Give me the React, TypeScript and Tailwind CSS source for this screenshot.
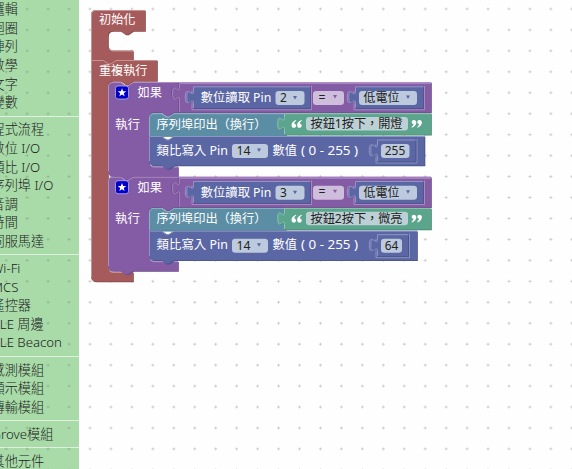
import type { ReactNode } from 'react';

const GROUPS = [
  ['邏輯', '迴圈', '陣列', '數學', '文字', '變數'],
  ['程式流程', '數位 I/O', '類比 I/O', '序列埠 I/O', '音調', '時間', '伺服馬達'],
  ['Wi-Fi', 'MCS', '遙控器', 'BLE 周邊', 'BLE Beacon'],
  ['感測模組', '顯示模組', '傳輸模組'],
  ['Grove模組'],
  ['其他元件'],
];

const NOTCH = 'l5 3.4h2.5l5 -3.4';
const NOTCH_BACK = 'l-5 3.4h-2.5l-5 -3.4';
const TAB = 'c0 8.4 -6.7 -6.7 -6.7 6.3s6.7 -2.1 6.7 6.3';
const TAB_UP = 'c0 -8.4 -6.7 6.7 -6.7 -6.3s6.7 2.1 6.7 -6.3';

type Tone = { fill: string; dark: string; light: string };
const RED: Tone = { fill: '#a55b5b', dark: '#844949', light: '#c99999' };
const PURPLE: Tone = { fill: '#845ba5', dark: '#694984', light: '#b394c9' };
const BLUE: Tone = { fill: '#5b67a5', dark: '#495284', light: '#949cc6' };
const TEAL: Tone = { fill: '#5b8ea5', dark: '#497284', light: '#94b6c6' };
const GREEN: Tone = { fill: '#5ba58c', dark: '#498470', light: '#94c6b5' };

function Shape({ d, edge, tone }: { d: string; edge: string; tone: Tone }) {
  return (
    <g>
      <path d={d} fill={tone.dark} transform="translate(0.8 0.8)" />
      <path d={d} fill={tone.fill} />
      <path d={edge} fill="none" stroke={tone.light} strokeWidth="0.9" />
    </g>
  );
}

function Label({ x, y, w, color = '#fff', size = 12.2, children }: { x: number; y: number; w: number; color?: string; size?: number; children: string }) {
  return (
    <text x={x} y={y} fill={color} fontSize={size} textLength={w} lengthAdjust="spacingAndGlyphs">
      {children}
    </text>
  );
}

function Field({ x, y, w, h = 14, fill = '#bdc9dc', children }: { x: number; y: number; w: number; h?: number; fill?: string; children?: ReactNode }) {
  return (
    <g>
      <rect x={x} y={y} width={w} height={h} rx="3.3" fill={fill} />
      {children}
    </g>
  );
}

function Arrow({ x, y, color }: { x: number; y: number; color: string }) {
  return <path d={`M${x - 2} ${y - 1.5}h4l-2 3.5z`} fill={color} />;
}

function Value({ x, y, w, h = 21.5, tone, parent }: { x: number; y: number; w: number; h?: number; tone: Tone; parent: Tone }) {
  const left = `V${y + 16.8}${TAB_UP}V${y}`;
  return (
    <g>
      <path d={`M${x - 1} ${y + 4}${TAB}V${y + h + 1.5}H${x + w + 1.5}V${y - 1}`} fill="none" stroke={parent.light} strokeWidth="0.8" />
      <Shape tone={tone} d={`M${x} ${y}H${x + w}V${y + h}H${x}${left}z`} edge={`M${x + 0.5} ${y + h - 0.5}${left}H${x + w}`} />
    </g>
  );
}

function Quote({ x, y, flip = false }: { x: number; y: number; flip?: boolean }) {
  const d = 'M4.4 0C1.6 1 0 3 0 5.2C0 6.9 1 7.8 2.4 7.8C3.7 7.8 4.6 6.9 4.6 5.7C4.6 4.6 3.9 3.8 2.8 3.7C2.9 2.5 3.5 1.6 4.8 0.8z';
  return (
    <g fill="#fff" transform={flip ? `translate(${x + 10.4} ${y + 7.8}) rotate(180)` : `translate(${x} ${y})`}>
      <path d={d} />
      <path d={d} transform="translate(5.6 0)" />
    </g>
  );
}

type Rule = { y: number; pin: string; message: string; level: string; right: number };

function IfBlock({ y, pin, message, level, right }: Rule) {
  const top = y + 31.2;
  const mid = y + 54;
  const foot = y + 84.5;
  const end = y + 94.3;
  const levelX = 379;
  return (
    <g>
      <Shape
        tone={PURPLE}
        d={`M108 ${y + 5}Q108 ${y} 113 ${y}H120.5${NOTCH}H431V${y + 30.5}H174${NOTCH_BACK}H154Q149 ${y + 30.5} 149 ${y + 35.5}V${foot - 5}Q149 ${foot} 154 ${foot}H178V${end}H133${NOTCH_BACK}H113Q108 ${end} 108 ${end - 5}z`}
        edge={`M108.5 ${end - 5}V${y + 5}Q108.5 ${y + 0.5} 113 ${y + 0.5}H120.5${NOTCH}H431M150 ${foot - 2}Q151 ${foot + 0.5} 154 ${foot + 0.5}H178`}
      />
      <rect x="115.5" y={y + 4} width="13" height="13" rx="2.5" fill="#0000c8" stroke="#b6aee8" strokeWidth="0.8" />
      <path
        transform={`translate(122 ${y + 10.6})`}
        d="M0-4.3L1.15-1.35L4.2-1.25L1.8 .7L2.6 3.7L0 2L-2.6 3.7L-1.8 .7L-4.2-1.25L-1.15-1.35z"
        fill="#fff"
      />
      <Label x={137.5} y={y + 15} w={24.5}>如果</Label>
      <Label x={115} y={y + 46.7} w={25}>執行</Label>
      <path d={`M178.5 ${y + 1}v4${TAB}V${y + 30}`} fill="none" stroke={PURPLE.dark} strokeWidth="1" />
      <path d={`M179.3 ${y + 30}V${y + 17.8}${TAB_UP}V${y + 1.6}H431`} fill="none" stroke={PURPLE.light} strokeWidth="0.8" />

      <Value x={193} y={y + 4.8} w={117} tone={BLUE} parent={PURPLE} />
      <Label x={200.8} y={y + 20} w={70.5}>數位讀取 Pin</Label>
      <Field x={275.5} y={y + 9} w={29}>
        <Label x={280} y={y + 20.3} w={6.8} color="#222">{pin}</Label>
        <Arrow x={295} y={y + 15.5} color={BLUE.fill} />
      </Field>
      <Field x={313} y={y + 9} w={31} fill="#cebddb">
        <Label x={318.5} y={y + 19.5} w={7} color="#222">=</Label>
        <Arrow x={335} y={y + 14.5} color={PURPLE.fill} />
      </Field>
      <Value x={355} y={y + 4.8} w={68} tone={BLUE} parent={PURPLE} />
      <Field x={359} y={y + 9} w={58}>
        <Label x={363.5} y={y + 20} w={36} color="#222">低電位</Label>
        <Arrow x={408} y={y + 15} color={BLUE.fill} />
      </Field>

      <Shape
        tone={TEAL}
        d={`M149 ${top + 5}Q149 ${top} 154 ${top}H161.5${NOTCH}H286V${mid}H149z`}
        edge={`M149.5 ${mid}V${top + 5}Q149.5 ${top + 0.5} 154 ${top + 0.5}H161.5${NOTCH}H286`}
      />
      <Shape
        tone={GREEN}
        d={`M284.5 ${top}H431V${top + 21.5}H284.5V${top + 16.8}${TAB_UP}z`}
        edge={`M284.5 ${top + 21}V${top + 16.8}${TAB_UP}V${top + 0.5}H431`}
      />
      <Label x={156.5} y={y + 46.5} w={110}>序列埠印出（換行）</Label>
      <Quote x={291.5} y={y + 38} />
      <Field x={306} y={y + 35} w={102} h={13.5} fill="#bcd0d5">
        <Label x={310.5} y={y + 46.4} w={92} color="#222">{message}</Label>
      </Field>
      <Quote x={411.5} y={y + 38} flip />

      <Shape
        tone={BLUE}
        d={`M149 ${mid}H161.5${NOTCH}H${right}V${y + 83.5}H174${NOTCH_BACK}H154Q149 ${y + 83.5} 149 ${y + 78.5}z`}
        edge={`M149.5 ${y + 79}V${mid + 0.5}H161.5${NOTCH}H${right}`}
      />
      <Label x={156.5} y={y + 72.6} w={71.5}>類比寫入 Pin</Label>
      <Field x={232} y={y + 62} w={36}>
        <Label x={236.5} y={y + 73.3} w={14} color="#222">14</Label>
        <Arrow x={259} y={y + 68} color={BLUE.fill} />
      </Field>
      <Label x={272.5} y={y + 72.6} w={24.5}>數值</Label>
      <Label x={301} y={y + 72.6} w={57}>( 0 - 255 )</Label>
      <Value x={377} y={y + 58} w={right - 386} tone={BLUE} parent={BLUE} />
      <Field x={381} y={y + 62} w={right - 396}>
        <Label x={levelX + 5.8} y={y + 73} w={level.length * 6.8} color="#222">{level}</Label>
      </Field>
    </g>
  );
}

function Workspace() {
  return (
    <svg
      className="absolute inset-0 h-[469px] w-[572px] font-['Noto_Sans','Noto_Sans_CJK_TC',sans-serif]"
      viewBox="0 0 572 469"
    >
      <defs>
        <pattern id="grid" x="79.5" y="-1.5" width="20.95" height="20.95" patternUnits="userSpaceOnUse">
          <path d="M9.2 10.5h2.6M10.5 9.2v2.6" stroke="#777" strokeOpacity="0.42" strokeWidth="1" />
        </pattern>
      </defs>
      <rect width="572" height="469" fill="url(#grid)" />
      <Shape
        tone={RED}
        d={`M91 15Q91 10 96 10H145V31H133${NOTCH_BACK}H113Q108 31 108 36V45.5Q108 50.5 113 50.5H133V60H116${NOTCH_BACK}H91z`}
        edge="M91.5 60V15Q91.5 10.5 96 10.5H145M109 48Q110 51 113 51H133"
      />
      <Shape
        tone={RED}
        d={`M91 60H103.5${NOTCH}H157V81H133${NOTCH_BACK}H113Q108 81 108 86V267Q108 272 113 272H133V281.5H96Q91 281.5 91 276.5z`}
        edge={`M91.5 277V60.5H103.5${NOTCH}H157M109 269.5Q110 272.5 113 272.5H133`}
      />
      <Label x={99} y={24.3} w={36.5}>初始化</Label>
      <Label x={99} y={74.6} w={48.5}>重複執行</Label>
      <IfBlock y={82} pin="2" message="按鈕1按下，開燈" level="255" right={424.5} />
      <IfBlock y={176.7} pin="3" message="按鈕2按下，微亮" level="64" right={417} />
    </svg>
  );
}

export default function App() {
  return (
    <main className="relative h-[469px] w-[572px] overflow-hidden bg-[#fefefe]">
      <nav className="h-full w-[79px] overflow-hidden bg-[#a8dba8] pt-[0.2px] font-['Noto_Sans','Noto_Sans_CJK_TC',sans-serif] text-[13.2px] font-light text-[#222]">
        {GROUPS.map((items, i) => (
          <div key={items[0]}>
            {i > 0 && (
              <div className="flex h-[8.6px] items-center">
                <div className="h-px w-full bg-[#e0f0e0]" />
              </div>
            )}
            {items.map((item) => (
              <div key={item} className="-ml-[8.5px] h-[18.6px] leading-[18.6px] whitespace-nowrap">
                {item}
              </div>
            ))}
          </div>
        ))}
      </nav>
      <Workspace />
    </main>
  );
}
